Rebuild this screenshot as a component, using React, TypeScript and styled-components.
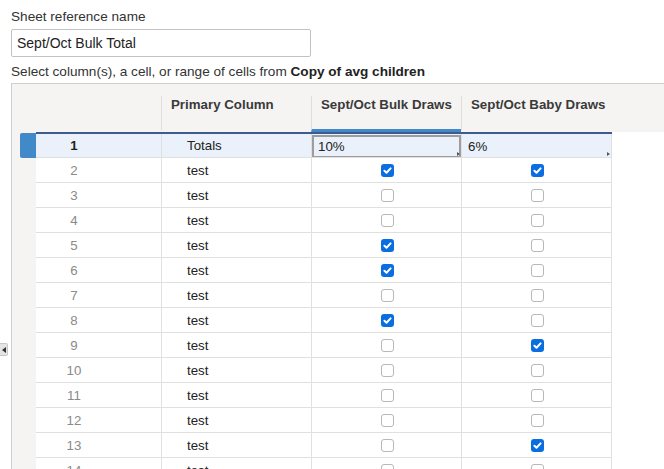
import React from "react";
import styled, { createGlobalStyle } from "styled-components";

const GlobalStyle = createGlobalStyle`
  html, body {
    margin: 0;
    padding: 0;
    height: 469px;
    overflow: hidden;
    background: #fff;
    font-family: "Liberation Sans", Arial, sans-serif;
    color: #333;
  }
`;

type Row = { num: number; name: string; bulk: boolean; baby: boolean };

const rows: Row[] = [
  { num: 2, name: "test", bulk: true, baby: true },
  { num: 3, name: "test", bulk: false, baby: false },
  { num: 4, name: "test", bulk: false, baby: false },
  { num: 5, name: "test", bulk: true, baby: false },
  { num: 6, name: "test", bulk: true, baby: false },
  { num: 7, name: "test", bulk: false, baby: false },
  { num: 8, name: "test", bulk: true, baby: false },
  { num: 9, name: "test", bulk: false, baby: true },
  { num: 10, name: "test", bulk: false, baby: false },
  { num: 11, name: "test", bulk: false, baby: false },
  { num: 12, name: "test", bulk: false, baby: false },
  { num: 13, name: "test", bulk: false, baby: true },
  { num: 14, name: "test", bulk: false, baby: false },
];

export default function App() {
  return (
    <>
      <GlobalStyle />
      <Page>
        <Label>Sheet reference name</Label>
        <NameInput defaultValue="Sept/Oct Bulk Total" />
        <Hint>
          Select column(s), a cell, or range of cells from <b>Copy of avg children</b>
        </Hint>

        <Panel>
          <HeaderBar>
            <Gutter />
            <NumHead />
            <HeadCell>Primary Column</HeadCell>
            <HeadCell active>Sept/Oct Bulk Draws</HeadCell>
            <HeadCell>Sept/Oct Baby Draws</HeadCell>
          </HeaderBar>

          <Body>
            <Gutter>
              <RowMarker />
            </Gutter>
            <Table>
              <TotalsRow>
                <NumCell strong>1</NumCell>
                <NameCell>Totals</NameCell>
                <ValueCell>
                  <SelectedBox>10%</SelectedBox>
                  <Handle />
                </ValueCell>
                <ValueCell last>
                  <ValueText>6%</ValueText>
                  <Handle />
                </ValueCell>
              </TotalsRow>
              {rows.map((r) => (
                <DataRow key={r.num}>
                  <NumCell>{r.num}</NumCell>
                  <NameCell>{r.name}</NameCell>
                  <CheckCell>
                    <Check checked={r.bulk} />
                  </CheckCell>
                  <CheckCell last>
                    <Check checked={r.baby} />
                  </CheckCell>
                </DataRow>
              ))}
            </Table>
          </Body>
        </Panel>

        <CollapseTab>
          <svg width="4" height="6" viewBox="0 0 4 6">
            <path d="M4 0 L0 3 L4 6 Z" fill="#333" />
          </svg>
        </CollapseTab>
      </Page>
    </>
  );
}

function Check({ checked }: { checked: boolean }) {
  return (
    <Box checked={checked}>
      {checked && (
        <svg width="13" height="13" viewBox="0 0 13 13">
          <path
            d="M3.4 6.7 L5.5 8.7 L9.6 4.4"
            fill="none"
            stroke="#fff"
            strokeWidth="2"
            strokeLinecap="round"
            strokeLinejoin="round"
          />
        </svg>
      )}
    </Box>
  );
}

const Page = styled.div`
  position: relative;
  padding: 9px 0 0 11px;
  height: 469px;
  box-sizing: border-box;
  overflow: hidden;
`;

const Label = styled.div`
  font-size: 13.6px;
  line-height: 16px;
  color: #333;
  margin-bottom: 4px;
`;

const NameInput = styled.input`
  display: block;
  box-sizing: border-box;
  width: 300px;
  height: 28px;
  margin: 0;
  padding: 0 5px;
  border: 1px solid #c2c2c2;
  border-radius: 2px;
  font-family: inherit;
  font-size: 14px;
  color: #222;
  outline: none;
`;

const Hint = styled.div`
  margin-top: 7px;
  font-size: 13.6px;
  line-height: 16px;
  color: #333;

  b {
    color: #222;
  }
`;

const Panel = styled.div`
  margin-top: 3px;
  border-top: 1px solid #cfcfcf;
  border-left: 1px solid #cfcfcf;
  height: 400px;
  overflow: hidden;
`;

const HeaderBar = styled.div`
  display: flex;
  height: 48px;
  background: #f5f4f2;
`;

const Gutter = styled.div`
  flex: 0 0 24px;
  background: #f5f4f2;
`;

const NumHead = styled.div`
  flex: 0 0 125px;
`;

const HeadCell = styled.div<{ active?: boolean }>`
  box-sizing: border-box;
  flex: 0 0 150px;
  margin-top: 12px;
  padding: 1px 9px 0;
  border-left: 1px solid #dedede;
  border-bottom: 3px solid ${(p) => (p.active ? "#4189c9" : "transparent")};
  font-size: 13.3px;
  line-height: 16px;
  font-weight: bold;
  color: #3a3a3a;
  white-space: nowrap;
`;

const Body = styled.div`
  display: flex;
  height: 100%;
`;

const RowMarker = styled.div`
  margin: 1px 0 0 8px;
  height: 25px;
  background: #4189c9;
  border-radius: 2px 0 0 2px;
`;

const Table = styled.div`
  display: flex;
  flex-direction: column;
  background: #fff;
`;

const RowBase = styled.div`
  display: grid;
  grid-template-columns: 125px 150px 150px 151px;
  box-sizing: border-box;
  border-bottom: 1px solid #e0e0e0;
`;

const TotalsRow = styled(RowBase)`
  height: 26px;
  border-top: 2px solid #3e5b8d;
  background: #eaf1fa;
`;

const DataRow = styled(RowBase)`
  height: 25px;
`;

const NumCell = styled.div<{ strong?: boolean }>`
  display: flex;
  align-items: center;
  justify-content: center;
  padding-right: 49px;
  font-size: 13.3px;
  color: ${(p) => (p.strong ? "#222" : "#8a8a8a")};
  font-weight: ${(p) => (p.strong ? "bold" : "normal")};
`;

const NameCell = styled.div`
  display: flex;
  align-items: center;
  padding-left: 25px;
  border-left: 1px solid #e0e0e0;
  font-size: 13.3px;
  color: #222;
`;

const ValueCell = styled.div<{ last?: boolean }>`
  position: relative;
  display: flex;
  border-left: 1px solid #e0e0e0;
  border-right: ${(p) => (p.last ? "1px solid #e0e0e0" : "none")};
`;

const SelectedBox = styled.div`
  flex: 1;
  box-sizing: border-box;
  margin: 1px 0 0 0;
  padding: 2px 4px 0;
  border: 2px solid #9d9d9d;
  border-bottom-width: 1px;
  font-size: 13.3px;
  line-height: 16px;
  color: #222;
`;

const ValueText = styled.div`
  padding: 5px 0 0 6px;
  font-size: 13.3px;
  line-height: 16px;
  color: #222;
`;

const Handle = styled.span`
  position: absolute;
  right: 1px;
  bottom: 1px;
  width: 0;
  height: 0;
  border-top: 2px solid transparent;
  border-bottom: 2px solid transparent;
  border-left: 3px solid #555;
`;

const CheckCell = styled.div<{ last?: boolean }>`
  display: flex;
  align-items: center;
  justify-content: center;
  border-left: 1px solid #e0e0e0;
  border-right: ${(p) => (p.last ? "1px solid #e0e0e0" : "none")};
`;

const Box = styled.span<{ checked: boolean }>`
  box-sizing: border-box;
  display: flex;
  width: 13px;
  height: 13px;
  margin-left: 1px;
  border-radius: 3px;
  background: ${(p) => (p.checked ? "#0b6ee0" : "#fff")};
  border: ${(p) => (p.checked ? "none" : "1px solid #b8b8b8")};
`;

const CollapseTab = styled.div`
  position: absolute;
  left: 0;
  top: 343px;
  width: 8px;
  height: 13px;
  box-sizing: border-box;
  display: flex;
  align-items: center;
  justify-content: center;
  background: #e4e4e4;
  border: 1px solid #c8c8c8;
  border-left: none;
  border-radius: 0 2px 2px 0;
`;
